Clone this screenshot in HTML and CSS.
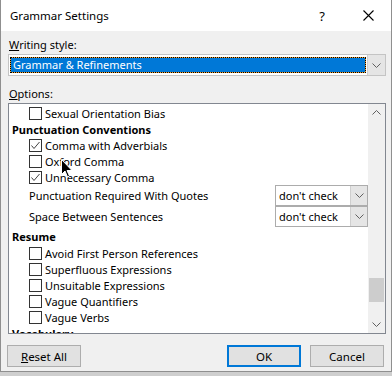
FILE: index.html
```html
<!DOCTYPE html>
<html>
<head>
    <meta charset="UTF-8">
    <title>Grammar Settings</title>
    <link rel="stylesheet" href="styles.css">
</head>
<body>
    <div class="dialog">
        <div class="titlebar">
            <span class="title">Grammar Settings</span>
            <span class="tb-btn help">?</span>
            <span class="tb-btn close">
                <svg width="11" height="11" viewBox="0 0 11 11"><path d="M0.5 0.5 L10.5 10.5 M10.5 0.5 L0.5 10.5" stroke="#000" stroke-width="1.1" fill="none"/></svg>
            </span>
        </div>

        <div class="content">
            <div class="field-label"><u>W</u>riting style:</div>
            <div class="combo">
                <div class="combo-value">Grammar &amp; Refinements</div>
                <div class="combo-btn">
                    <svg width="9" height="5" viewBox="0 0 9 5"><path d="M0.5 0.5 L4.5 4.5 L8.5 0.5" stroke="#606060" fill="none"/></svg>
                </div>
            </div>

            <div class="field-label options-label"><u>O</u>ptions:</div>
            <div class="listbox">
                <div class="items">
                    <div class="row check"><span class="box"></span>Sexual Orientation Bias</div>
                    <div class="row header">Punctuation Conventions</div>
                    <div class="row check"><span class="box checked"><svg width="11" height="11" viewBox="0 0 11 11"><path d="M1.5 5.5 L4 8.5 L9.5 2" stroke="#444" stroke-width="1" fill="none"/></svg></span>Comma with Adverbials</div>
                    <div class="row check"><span class="box"></span>Oxford Comma</div>
                    <div class="row check"><span class="box checked"><svg width="11" height="11" viewBox="0 0 11 11"><path d="M1.5 5.5 L4 8.5 L9.5 2" stroke="#444" stroke-width="1" fill="none"/></svg></span>Unnecessary Comma</div>
                    <div class="row option">
                        <span>Punctuation Required With Quotes</span>
                        <div class="mini-select">
                            <span class="mini-value">don't check</span>
                            <span class="mini-btn"><svg width="9" height="5" viewBox="0 0 9 5"><path d="M0.5 0.5 L4.5 4.5 L8.5 0.5" stroke="#606060" fill="none"/></svg></span>
                        </div>
                    </div>
                    <div class="row option">
                        <span>Space Between Sentences</span>
                        <div class="mini-select">
                            <span class="mini-value">don't check</span>
                            <span class="mini-btn"><svg width="9" height="5" viewBox="0 0 9 5"><path d="M0.5 0.5 L4.5 4.5 L8.5 0.5" stroke="#606060" fill="none"/></svg></span>
                        </div>
                    </div>
                    <div class="row header tall">Resume</div>
                    <div class="row check"><span class="box"></span>Avoid First Person References</div>
                    <div class="row check"><span class="box"></span>Superfluous Expressions</div>
                    <div class="row check"><span class="box"></span>Unsuitable Expressions</div>
                    <div class="row check"><span class="box"></span>Vague Quantifiers</div>
                    <div class="row check"><span class="box"></span>Vague Verbs</div>
                    <div class="row header">Vocabulary</div>
                </div>
                <div class="scrollbar">
                    <div class="arrow">
                        <svg width="9" height="5" viewBox="0 0 9 5"><path d="M0.5 4.5 L4.5 0.5 L8.5 4.5" stroke="#606060" fill="none"/></svg>
                    </div>
                    <div class="track"><div class="thumb"></div></div>
                    <div class="arrow">
                        <svg width="9" height="5" viewBox="0 0 9 5"><path d="M0.5 0.5 L4.5 4.5 L8.5 0.5" stroke="#606060" fill="none"/></svg>
                    </div>
                </div>
            </div>

            <div class="footer">
                <button class="btn"><u>R</u>eset All</button>
                <span class="spacer"></span>
                <button class="btn default">OK</button>
                <button class="btn">Cancel</button>
            </div>
        </div>

        <!-- mouse pointer -->
        <svg class="cursor" width="12" height="19" viewBox="0 0 12 19">
            <path d="M0.5 0.5 L0.5 15.5 L4 12 L6.5 18 L8.5 17 L6 11.5 L11 11.5 Z" fill="#000" stroke="#fff" stroke-width="1"/>
        </svg>
    </div>
</body>
</html>
```

FILE: styles.css
```css
* {
    box-sizing: border-box;
}
body {
    margin: 0;
    background: #cfcfcf;
    font-family: "Noto Sans", "Open Sans", sans-serif;
    font-size: 11px;
    color: #000;
}
.dialog {
    position: relative;
    width: 392px;
    height: 372px;
    background: #f0f0f0;
    border: 1px solid #8f8f8f;
    border-top: none;
}
.titlebar {
    height: 31px;
    background: #fff;
    display: flex;
    align-items: center;
    padding-left: 9px;
}
.title {
    flex: 1;
    font-size: 11.5px;
}
.tb-btn {
    width: 46px;
    height: 31px;
    display: flex;
    align-items: center;
    justify-content: center;
}
.help {
    font-size: 13px;
}
.content {
    padding: 6px 5px 0 7px;
}
.field-label {
    height: 16px;
    line-height: 16px;
    padding-left: 1px;
}
.options-label {
    margin-top: 10px;
}
.combo {
    margin-top: 1px;
    height: 22px;
    display: flex;
    border: 1px solid #c4c4c4;
    background: #fff;
}
.combo-value {
    flex: 1;
    margin: 2px 1px 2px 1px;
    border: 1px dotted #000;
    background: linear-gradient(#0078d7, #0078d7) padding-box, linear-gradient(#f0a030, #f0a030) border-box;
    color: #fff;
    line-height: 13px;
    padding-left: 2px;
}
.combo-btn {
    width: 18px;
    background: #e5e5e5;
    border-left: 1px solid #cfcfcf;
    display: flex;
    align-items: center;
    justify-content: center;
}
.listbox {
    margin-top: 1px;
    height: 231px;
    display: flex;
    border: 1px solid #828790;
    background: #fff;
}
.items {
    flex: 1;
    overflow: hidden;
    padding-top: 1px;
}
.row {
    height: 16px;
    display: flex;
    align-items: center;
    white-space: nowrap;
}
.header {
    font-weight: bold;
    padding-left: 3px;
}
.header.tall {
    height: 18px;
}
.check {
    padding-left: 20px;
}
.box {
    width: 13px;
    height: 13px;
    border: 1px solid #333;
    background: #fff;
    margin-right: 3px;
    display: flex;
    align-items: center;
    justify-content: center;
}
.option {
    height: 21px;
    padding-left: 20px;
    justify-content: space-between;
}
.mini-select {
    width: 93px;
    height: 21px;
    display: flex;
    border: 1px solid #acacac;
    background: #fff;
}
.mini-value {
    flex: 1;
    padding-left: 3px;
    line-height: 19px;
}
.mini-btn {
    width: 17px;
    background: #e5e5e5;
    border-left: 1px solid #cfcfcf;
    display: flex;
    align-items: center;
    justify-content: center;
}
.scrollbar {
    width: 17px;
    background: #f0f0f0;
    display: flex;
    flex-direction: column;
}
.arrow {
    height: 17px;
    display: flex;
    align-items: center;
    justify-content: center;
}
.track {
    flex: 1;
}
.thumb {
    margin: 157px 1px 0 1px;
    height: 24px;
    background: #cdcdcd;
}
.footer {
    display: flex;
    margin-top: 11px;
    padding-right: 2px;
}
.spacer {
    flex: 1;
}
.btn {
    width: 74px;
    height: 22px;
    margin: 0;
    padding: 0;
    background: #e1e1e1;
    border: 1px solid #adadad;
    font-family: inherit;
    font-size: 11.5px;
    color: #000;
}
.btn:first-child {
    margin-left: -1px;
}
.btn.default {
    border: 2px solid #0078d7;
    margin-right: 9px;
}
.cursor {
    position: absolute;
    left: 60px;
    top: 159px;
}
```
